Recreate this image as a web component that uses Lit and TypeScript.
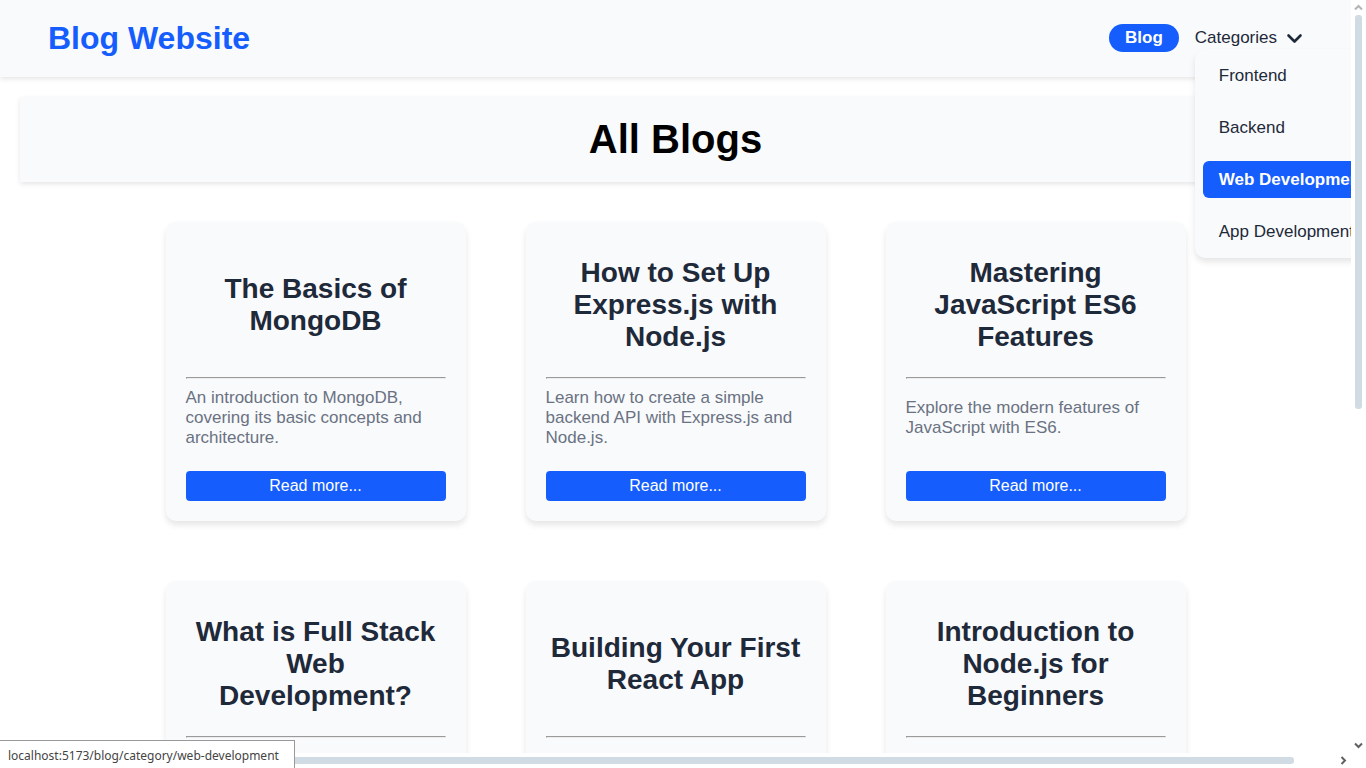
import { LitElement, html, css, nothing } from "lit";
import { customElement, property } from "lit/decorators.js";
import { classMap } from "lit/directives/class-map.js";

interface Post {
  title: string;
  summary?: string;
}

const posts: Post[] = [
  {
    title: "The Basics of MongoDB",
    summary: "An introduction to MongoDB, covering its basic concepts and architecture.",
  },
  {
    title: "How to Set Up Express.js with Node.js",
    summary: "Learn how to create a simple backend API with Express.js and Node.js.",
  },
  {
    title: "Mastering JavaScript ES6 Features",
    summary: "Explore the modern features of JavaScript with ES6.",
  },
  { title: "What is Full Stack Web Development?" },
  { title: "Building Your First React App" },
  { title: "Introduction to Node.js for Beginners" },
];

const categories = [
  { name: "Frontend", slug: "frontend" },
  { name: "Backend", slug: "backend" },
  { name: "Web Development", slug: "web-development" },
  { name: "App Development", slug: "app-development" },
];

const activeSlug = "web-development";

@customElement("site-header")
class SiteHeader extends LitElement {
  static styles = css`
    :host {
      display: block;
      position: relative;
      z-index: 1;
    }
    .bar {
      display: flex;
      align-items: center;
      justify-content: space-between;
      padding: 20px 48px;
      background: #f9fafc;
      box-shadow: 0 2px 5px rgba(0, 0, 0, 0.1);
    }
    .brand {
      margin: 0;
      font-size: 32px;
      line-height: 37px;
      color: #155dfc;
    }
    .nav {
      display: flex;
      align-items: center;
      gap: 16px;
      padding-bottom: 1px;
    }
    .pill {
      padding: 4px 16px;
      border-radius: 14px;
      background: #155dfc;
      color: #fff;
      font-size: 17px;
      font-weight: bold;
      line-height: 20px;
      text-decoration: none;
    }
    .group {
      position: relative;
    }
    .toggle {
      display: flex;
      align-items: center;
      gap: 9px;
      padding: 0;
      border: 0;
      background: none;
      color: #1e2939;
      font: inherit;
      font-size: 17px;
      line-height: 20px;
    }
    .chevron {
      display: block;
      width: 17px;
      height: 17px;
    }
    .menu {
      position: absolute;
      top: 21px;
      left: 0;
      display: grid;
      gap: 15px;
      margin: 0;
      padding: 8px;
      list-style: none;
      white-space: nowrap;
      border-radius: 10px;
      background: #f9fafc;
      box-shadow: 0 4px 6px rgba(0, 0, 0, 0.1);
    }
    .item {
      display: block;
      padding: 8px 16px;
      border-radius: 6px;
      color: #1e2939;
      font-size: 17px;
      line-height: 21px;
      text-decoration: none;
    }
    .item.active {
      background: #155dfc;
      color: #fff;
      font-weight: bold;
    }
  `;

  render() {
    return html`
      <header class="bar">
        <h1 class="brand">Blog Website</h1>
        <nav class="nav">
          <a class="pill" href="#blog">Blog</a>
          <div class="group">
            <button class="toggle" type="button" aria-expanded="true">
              Categories
              <svg class="chevron" viewBox="0 0 17 17" fill="none" aria-hidden="true">
                <path
                  d="M2.5 5.5 8.5 11.5 14.5 5.5"
                  stroke="currentColor"
                  stroke-width="2.6"
                  stroke-linecap="round"
                  stroke-linejoin="round"
                />
              </svg>
            </button>
            <ul class="menu">
              ${categories.map(
                (c) => html`<li>
                  <a
                    class=${classMap({ item: true, active: c.slug === activeSlug })}
                    href="#${c.slug}"
                    >${c.name}</a
                  >
                </li>`
              )}
            </ul>
          </div>
        </nav>
      </header>
    `;
  }
}

@customElement("post-card")
class PostCard extends LitElement {
  @property({ attribute: false }) post!: Post;

  static styles = css`
    :host {
      display: block;
    }
    .card {
      padding: 20px;
      border-radius: 10px;
      background: #f9fafc;
      box-shadow: 0 4px 6px rgba(0, 0, 0, 0.1);
    }
    .title {
      display: flex;
      align-items: center;
      justify-content: center;
      min-height: 125px;
      margin: 0;
      padding: 0 4px;
      font-size: 28px;
      line-height: 32px;
      text-align: center;
      color: #1e2939;
    }
    .rule {
      margin: 10px 0 9px;
      border: 1px solid;
      border-color: #9a9a9a #ededed #ededed #9a9a9a;
    }
    .summary {
      display: flex;
      align-items: center;
      min-height: 60px;
      margin: 0 0 23px;
      font-size: 17px;
      line-height: 20px;
      color: #6a7282;
    }
    .more {
      display: block;
      width: 100%;
      padding: 0;
      border: 0;
      border-radius: 4px;
      background: #155dfc;
      color: #fff;
      font: inherit;
      font-size: 16px;
      line-height: 30px;
    }
  `;

  render() {
    return html`
      <article class="card">
        <h2 class="title">${this.post.title}</h2>
        <hr class="rule" />
        <p class="summary">${this.post.summary ?? nothing}</p>
        <button class="more" type="button">Read more...</button>
      </article>
    `;
  }
}

@customElement("app-root")
class AppRoot extends LitElement {
  static styles = css`
    :host {
      position: relative;
      display: grid;
      grid-template: minmax(0, 1fr) 15px / minmax(0, 1fr) 15px;
      height: 100vh;
      overflow: hidden;
      background: #fff;
      font-family: "Liberation Sans", Arial, sans-serif;
    }
    .page {
      overflow: hidden;
    }
    .banner {
      margin: 20px 20px 0;
      padding: 20px;
      background: #f9fafc;
      box-shadow: 0 2px 5px rgba(0, 0, 0, 0.1);
      font-size: 40px;
      line-height: 45px;
      text-align: center;
      color: #000;
    }
    .posts {
      display: grid;
      grid-template-columns: repeat(auto-fit, 300px);
      justify-content: center;
      gap: 60px;
      padding: 40px 20px;
    }
    .track {
      display: flex;
      align-items: center;
      background: #fff;
    }
    .vertical {
      flex-direction: column;
    }
    .thumb {
      border-radius: 3px;
      background: #d0dbe3;
    }
    .vertical .thumb {
      width: 7px;
      height: 394px;
    }
    .horizontal .thumb {
      height: 7px;
      width: 1279px;
    }
    .arrow {
      flex: none;
      width: 15px;
      height: 15px;
      color: #606060;
    }
    .arrow.faint {
      color: #b4b4b4;
    }
    .space {
      flex: 1;
    }
    .status {
      position: absolute;
      left: 0;
      bottom: 0;
      padding: 5px 15px 2px 8px;
      border-top: 1px solid #999;
      border-right: 1px solid #999;
      background: #fff;
      color: #444;
      font-family: "Noto Sans", "Open Sans", sans-serif;
      font-size: 12px;
      line-height: 20px;
    }
  `;

  private arrow(d: string, faint = false) {
    return html`<svg
      class=${classMap({ arrow: true, faint })}
      viewBox="0 0 15 15"
      fill="none"
      aria-hidden="true"
    >
      <path d=${d} stroke="currentColor" stroke-width="2" />
    </svg>`;
  }

  render() {
    return html`
      <div class="page">
        <site-header></site-header>
        <main>
          <h1 class="banner">All Blogs</h1>
          <section class="posts">
            ${posts.map((p) => html`<post-card .post=${p}></post-card>`)}
          </section>
        </main>
      </div>
      <div class="track vertical">
        ${this.arrow("M4 9.5 7.5 6 11 9.5", true)}
        <div class="thumb"></div>
        <div class="space"></div>
        ${this.arrow("M4 5.5 7.5 9 11 5.5")}
      </div>
      <div class="track horizontal">
        ${this.arrow("M9.5 4 6 7.5 9.5 11")}
        <div class="thumb"></div>
        <div class="space"></div>
        ${this.arrow("M5.5 4 9 7.5 5.5 11")}
      </div>
      <div class="status">localhost:5173/blog/category/web-development</div>
    `;
  }
}
